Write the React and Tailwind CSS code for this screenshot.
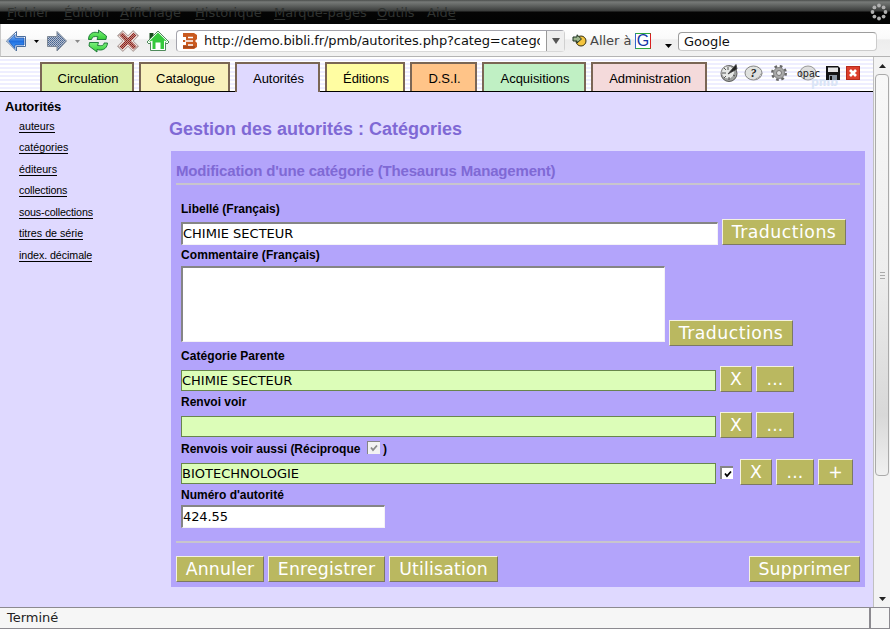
import React from 'react';

const UI = 'font-["DejaVu_Sans",sans-serif]';
const SANS = 'font-["Liberation_Sans",Arial,sans-serif]';

const menus = [
  ['', 'F', 'ichier', 'w-[57px]'],
  ['', 'É', 'dition', 'w-[56px]'],
  ['', 'A', 'ffichage', 'w-[75px]'],
  ['', 'H', 'istorique', 'w-[79px]'],
  ['', 'M', 'arque-pages', 'w-[103px]'],
  ['', 'O', 'utils', 'w-[50px]'],
  ['Aid', 'e', '', 'w-[40px]'],
];

const tabs = [
  ['Circulation', 'w-[94px] bg-[#dcf0a8]'],
  ['Catalogue', 'w-[91px] bg-[#f8f1bc]'],
  ['Autorités', 'w-[85px] bg-[#dfd9ff]'],
  ['Éditions', 'w-[80px] bg-[#fffda2]'],
  ['D.S.I.', 'w-[67px] bg-[#ffc488]'],
  ['Acquisitions', 'w-[104px] bg-[#c0f0c4]'],
  ['Administration', 'w-[116px] bg-[#f4dadb]'],
];

const links = [
  ['auteurs', ''],
  ['catégories', ''],
  ['éditeurs', ''],
  ['collections', 'tracking-[-0.15px]'],
  ['sous-collections', 'tracking-[-0.13px]'],
  ['titres de série', ''],
  ['index. décimale', 'tracking-[-0.07px]'],
];

function MenuBar() {
  return (
    <div className={`${UI} relative flex h-6 bg-[linear-gradient(#4a4d4b_0px,#777a78_2px,#636664_5px,#393b3a_11px,#050505_12px,#020303_24px)] pl-[7px] text-[13px] leading-[26px] text-[#303331]`}>
      {menus.map(([a, u, b, w]) => (
        <span key={u + b} className={`${w} shrink-0 whitespace-nowrap`}>
          {a}<span className="underline underline-offset-2">{u}</span>{b}
        </span>
      ))}
      <svg className="absolute left-[870px] top-[3px]" width="18" height="18" viewBox="0 0 18 18" fill="#b0b0b0">
        <circle cx="9" cy="2.5" r="1.9" /><circle cx="13.6" cy="4.4" r="1.9" /><circle cx="15.5" cy="9" r="1.9" /><circle cx="13.6" cy="13.6" r="1.9" />
        <circle cx="9" cy="15.5" r="1.9" /><circle cx="4.4" cy="13.6" r="1.9" /><circle cx="2.5" cy="9" r="1.9" /><circle cx="4.4" cy="4.4" r="1.9" />
      </svg>
    </div>
  );
}

function NavIcons() {
  return (
    <svg className="shrink-0" width="175" height="33" viewBox="0 24 175 33">
      <defs>
        <linearGradient id="blue" x1="0" y1="0" x2="0" y2="1"><stop offset="0" stopColor="#8ec2f8" /><stop offset=".5" stopColor="#1f6fe0" /><stop offset="1" stopColor="#4da3ff" /></linearGradient>
        <linearGradient id="green" x1="0" y1="0" x2="0" y2="1"><stop offset="0" stopColor="#7df07d" /><stop offset="1" stopColor="#35cf35" /></linearGradient>
        <pattern id="dots" width="2" height="2" patternUnits="userSpaceOnUse"><rect width="2" height="2" fill="#b4bed0" /><rect width="1" height="1" fill="#44628f" /><rect x="1" y="1" width="1" height="1" fill="#5d7499" /></pattern>
        <pattern id="reddots" width="2" height="2" patternUnits="userSpaceOnUse"><rect width="2" height="2" fill="#b98f88" /><rect width="1" height="1" fill="#8c1a18" /><rect x="1" y="1" width="1" height="1" fill="#a02a20" /></pattern>
      </defs>
      <path d="M6.500 41 16.500 31.500V36.500H25.500V46.500H16.500V51Z" fill="#fff" stroke="#4a6d9c" strokeWidth="1" />
      <path d="M8.500 41 15 34.500V38H24V45H15V48.500Z" fill="url(#blue)" stroke="#1551b0" strokeWidth=".8" />
      <path d="M34 40h5l-2.500 3z" fill="#000" />
      <path d="M66.500 41 57 31.500V36.500H47.500V46.500H57V51Z" fill="url(#dots)" stroke="#7c8795" strokeWidth="1" />
      <path d="M75 40h5l-2.500 3z" fill="#888" />
      <g stroke="#167232" strokeWidth=".9" fill="url(#green)" strokeLinejoin="round">
        <path d="M88.500 39.500C88.500 33 94 31 98.500 33L98.500 30 106.500 36 106 39.500 97 39.500 98 36.800C94 36 92 37 91.500 39.500Z" />
        <path d="M107.500 43C107 49.500 101.500 51 97 49.500L97 52 89 46 89.500 42.500 98.500 42.500 97.500 45.500C102 46 104 45.500 104 43Z" />
      </g>
      <g fill="none">
        <path d="M120 33 136 49M136 33 120 49" stroke="#8b7773" strokeWidth="8" />
        <path d="M120.500 33.500 135.500 48.500M135.500 33.500 120.500 48.500" stroke="#f1e4e0" strokeWidth="6.800" />
        <path d="M121 34 135 48M135 34 121 48" stroke="url(#reddots)" strokeWidth="4.400" />
      </g>
      <path d="M149.500 33h4v4l-4 3z" fill="#164d1c" />
      <path d="M147 42 158 31 169 42 167 44 165.500 42.500V50.500H150.500V42.500L149 44Z" fill="#fff" stroke="#4f8a5b" strokeWidth="1" />
      <path d="M148.500 42 158 32.500 167.500 42 164 40.500V49H160.500V42.500H155.500V49H152.500V40.500Z" fill="#35c93c" />
    </svg>
  );
}

function Toolbar() {
  return (
    <div className={`${UI} flex h-[33px] items-center border-b border-[#b4b4b4] border-l border-l-[#c8c8c8] bg-[linear-gradient(#ffffff,#fafafa_45%,#ededed_50%,#f2f2f2)] text-[13px]`}>
      <div className="-ml-px flex shrink-0"><NavIcons /></div>
      <div className="ml-px mt-px flex h-[22px] w-[389px] shrink-0 items-center rounded-sm border border-[#a4a4ac] border-r-[#d0d0d0] border-b-[#d8d8d8] bg-white">
        <svg className="ml-[6px] shrink-0" width="15" height="16" viewBox="0 0 15 16">
          <path d="M0 0H11L14 2V6L12 8 14 10V14L11 16H0V12H3V9H0V7H3V4H0Z" fill="#c95a20" />
          <path d="M5 4.500H10M2 8H10M5 12H10" stroke="#fff" strokeWidth="1.500" /><path d="M0 14h12" stroke="#85391a" />
        </svg>
        <span className="ml-[6px] mt-px w-[336px] shrink-0 overflow-hidden whitespace-nowrap text-[13px] leading-5 tracking-[-0.100px] text-[#111]">http://demo.bibli.fr/pmb/autorites.php?categ=categories</span>
        <span className="ml-[6px] flex h-5 flex-1 items-center justify-center border-l border-[#999] bg-[#efefef]">
          <svg width="8" height="6"><path d="M0 0H8L4 6Z" fill="#555" /></svg>
        </span>
      </div>
      <svg className="ml-[7px] shrink-0" width="15" height="13" viewBox="0 0 15 13">
        <circle cx="9" cy="7" r="5" fill="#f4c43e" stroke="#35300f" />
        <path d="M1 3H5V.8L9.500 5 5 9V7H1Z" fill="#9bb48b" stroke="#1c3020" />
      </svg>
      <span className="ml-[3px] mt-[2px] w-[45px] shrink-0 whitespace-nowrap text-[#444]">Aller à</span>
      <span className="mt-px flex h-4 w-4 shrink-0 items-center justify-center border border-t-[#2fa83c] border-r-[#d81f1f] border-b-[#2fa83c] border-l-[#3366cc] bg-white font-['Liberation_Sans',sans-serif] text-[16px] leading-none text-[#1437a5]">G</span>
      <svg className="ml-[14px] mt-[11px] shrink-0" width="7" height="4"><path d="M0 0H7L3.500 4Z" fill="#000" /></svg>
      <span className="ml-[6px] mt-[2px] h-[19px] w-[199px] rounded-sm border border-[#9d9d9d] border-r-[#ccc] border-b-[#ccc] bg-white pl-[5px] leading-[17px] text-[#111]">Google</span>
    </div>
  );
}

function PageIcons() {
  return (
    <svg className="ml-[7px] mt-[2px] shrink-0" width="154" height="28" viewBox="719 62 154 28">
      <g stroke="#444" strokeWidth=".9">
        <circle cx="729" cy="73.500" r="8" fill="#9fa2a0" stroke="#505050" />
        <circle cx="728" cy="72.500" r="6.500" fill="#e6e8e6" stroke="#999" />
        <path d="M728 67v3M722 73h4M724 68l2 2M724 78l2-2M729 80v-3M735 76l-2-1" />
        <path d="M728 74 736 64.500 737 69Z" fill="#222" />
      </g>
      <ellipse cx="753.500" cy="73" rx="8.500" ry="7" fill="#dfe1df" stroke="#858585" />
      <path d="M756 79q5-2 5.500-6" stroke="#999" strokeWidth="2" strokeDasharray="1 1" fill="none" />
      <text x="750.500" y="77" fontFamily="Liberation Serif" fontSize="12" fontStyle="italic" fontWeight="bold" fill="#222">?</text>
      <circle cx="779" cy="73" r="6.500" fill="none" stroke="#686868" strokeWidth="3" strokeDasharray="2.550 2.550" />
      <circle cx="779" cy="73" r="5.500" fill="#a9a9a9" stroke="#888" /><circle cx="779" cy="73" r="2.500" fill="#e2e2e2" stroke="#777" />
      <ellipse cx="808" cy="73" rx="8" ry="7" fill="#dedede" stroke="#999" />
      <text x="811" y="86" fontFamily="DejaVu Sans" fontSize="13" fontWeight="bold" fill="#d9e4f6" textLength="27" lengthAdjust="spacingAndGlyphs">pmb</text>
      <text x="797" y="76.500" fontFamily="DejaVu Sans" fontSize="10.500" fill="#222" textLength="23" lengthAdjust="spacingAndGlyphs">opac</text>
      <path d="M826 66H838L840 68V80H826Z" fill="#141414" /><path d="M828 67.500H838V72H828Z" fill="#e5e5e5" /><path d="M829 75H837V80H829Z" fill="#8994a0" /><path d="M830 76h2v4h-2z" fill="#111" />
      <rect x="846.500" y="66.500" width="13" height="13" fill="#dc3e2c" stroke="#b62a1b" />
      <path d="M850 70 856 76M856 70 850 76" stroke="#fff" strokeWidth="2.700" />
    </svg>
  );
}

function Tabs() {
  return (
    <div className={`${SANS} flex h-[35px] w-[873px] gap-[5px] border-b border-black bg-[repeating-linear-gradient(#ffffff_0px,#ffffff_2px,#eeeeff_2px,#eeeeff_4px)] pl-[40px] pt-[5px] text-[13px]`}>
      {tabs.map(([name, cls], i) => (
        <div key={name} className={`${cls} ${i === 2 ? 'h-[30px]' : 'h-[29px]'} shrink-0 border-2 border-b-0 border-[#7a6655] pl-[2px] pt-[5px] text-center leading-5 tracking-[-0.05px] whitespace-nowrap text-black`}>{name}</div>
      ))}
      <div className="-mt-[2px]"><PageIcons /></div>
    </div>
  );
}

function Btn({ w, children, className = '' }) {
  return (
    <button className={`${UI} ${w} ${className} h-[26px] shrink-0 border border-t-[#f4f2e0] border-r-[#7c7963] border-b-[#7c7963] border-l-[#f4f2e0] bg-[#bab860] text-center text-[17.3px] leading-[23px] tracking-[0.2px] whitespace-nowrap text-white`}>{children}</button>
  );
}

function Label({ children, className }) {
  return <div className={`${SANS} ${className} flex h-4 items-center pl-[5px] text-[12px] leading-4 font-bold whitespace-nowrap text-black`}>{children}</div>;
}

function GreenField({ children }) {
  return <div className={`${UI} mt-1 h-[21px] w-[535px] shrink-0 border border-[#68864c] bg-[#dcfdb8] text-[13px] leading-[19px] text-black`}>{children}</div>;
}

const inset = 'border-t-2 border-l-2 border-r border-b border-t-[#858585] border-l-[#858585] border-r-[#f4f2f6] border-b-[#f4f2f6] bg-white';

function Check({ muted }) {
  return (
    <span className={`flex h-[13px] w-[13px] shrink-0 items-center justify-center border-[#858585] ${muted ? '-mt-[3px] border-t border-l bg-[#f2f2f2]' : 'border-t-2 border-l-2 bg-white'}`}>
      <svg width="8" height="8" viewBox="0 0 8 8"><path d="M1 3.500 3 6 7 1.500" fill="none" stroke={muted ? '#8a8a8a' : '#000'} strokeWidth="1.800" /></svg>
    </span>
  );
}

function Sidebar() {
  return (
    <div className={`${SANS} w-[169px] shrink-0 pl-[5px] pt-[7px] text-black`}>
      <div className="h-[17px] text-[13px] leading-4 font-bold tracking-[-0.1px]">Autorités</div>
      <div className="flex flex-col items-start pl-[14px]">
        {links.map(([l, track]) => (
          <div key={l} className="h-[21.45px] pt-[4px]">
            <a className={`${track} block h-[13px] border-b border-black text-[10.7px] leading-[13px] whitespace-nowrap`}>{l}</a>
          </div>
        ))}
      </div>
    </div>
  );
}

function Form() {
  return (
    <div className="ml-[2px] mt-[11px] h-[436px] w-[694px] bg-[#b3a4fb] px-[5px] pt-[11px]">
      <h3 className={`${SANS} h-[21px] text-[15px] leading-[18px] font-bold tracking-[-0.18px] whitespace-nowrap text-[#7f69d5]`}>Modification d'une catégorie (Thesaurus Management)</h3>
      <div className="h-[2px] bg-[#c8c5cd]" />
      <Label className="mt-[16px]">Libellé (Français)</Label>
      <div className="mt-[2px] flex gap-1 pl-[5px]">
        <div className={`${UI} ${inset} mt-[3px] h-[23px] w-[537px] text-[13px] leading-5`}>CHIMIE SECTEUR</div>
        <Btn w="w-[124px]"><span className="tracking-[0.5px]">Traductions</span></Btn>
      </div>
      <Label className="mt-[2px]"><span className="tracking-[0.07px]">Commentaire (Français)</span></Label>
      <div className="mt-[3px] flex h-[80px] items-end gap-1 pl-[5px]">
        <div className={`${inset} mb-1 h-[76px] w-[484px]`} />
        <Btn w="w-[124px]"><span className="tracking-[0.5px]">Traductions</span></Btn>
      </div>
      <Label className="mt-[2px]"><span className="tracking-[0.06px]">Catégorie Parente</span></Label>
      <div className="mt-[2px] flex gap-1 pl-[5px]">
        <GreenField>CHIMIE SECTEUR</GreenField><Btn w="w-[32px]">X</Btn><Btn w="w-[38px]">...</Btn>
      </div>
      <Label className="mt-[2px]">Renvoi voir</Label>
      <div className="mt-[2px] flex gap-1 pl-[5px]">
        <GreenField /><Btn w="w-[32px]">X</Btn><Btn w="w-[38px]">...</Btn>
      </div>
      <Label className="mt-[3px]">
        <span className="w-[186px]">Renvois voir aussi (Réciproque</span><Check muted /><span className="ml-[3px]">)</span>
      </Label>
      <div className="mt-[2px] flex gap-1 pl-[5px]">
        <GreenField>BIOTECHNOLOGIE</GreenField>
        <span className="mr-[3px] mt-[7px]"><Check /></span>
        <Btn w="w-[32px]">X</Btn><Btn w="w-[38px]">...</Btn><Btn w="w-[35px]">+</Btn>
      </div>
      <Label className="mt-[2px]">Numéro d'autorité</Label>
      <div className={`${UI} ${inset} ml-[5px] mt-[2px] h-[23px] w-[204px] text-[13px] leading-5 tracking-[-0.1px]`}>424.55</div>
      <div className="mt-[13px] h-[2px] bg-[#c8c5cd]" />
      <div className="mt-[13px] flex gap-1">
        <Btn w="w-[88px]">Annuler</Btn><Btn w="w-[117px]">Enregistrer</Btn><Btn w="w-[109px]">Utilisation</Btn>
        <Btn w="w-[111px]" className="ml-auto">Supprimer</Btn>
      </div>
    </div>
  );
}

function Scrollbar() {
  return (
    <div className="flex w-[17px] shrink-0 flex-col items-center border-l border-[#c0c0c0] bg-[#f3f3f3]">
      <div className="flex h-[17px] w-full items-center justify-center"><svg width="7" height="4"><path d="M0 4 3.500 0 7 4Z" fill="#222" /></svg></div>
      <div className="flex h-[402px] w-[14px] flex-col items-center justify-center gap-[2px] rounded-sm border border-[#aaa] bg-[linear-gradient(#f8f8f8,#ededed_50%,#d8d8d8_85%,#f0f0f0)]">
        <div className="h-px w-[5px] bg-[#aaa]" /><div className="h-px w-[5px] bg-[#aaa]" /><div className="h-px w-[5px] bg-[#aaa]" />
      </div>
      <div className="mt-auto flex h-[16px] items-center"><svg width="7" height="4"><path d="M0 0H7L3.500 4Z" fill="#222" /></svg></div>
    </div>
  );
}

export default function App() {
  return (
    <div className="flex h-[629px] w-[890px] flex-col overflow-hidden bg-white">
      <MenuBar />
      <Toolbar />
      <div className="flex h-[550px] bg-[#dfd9ff]">
        <div className="w-[873px] shrink-0">
          <Tabs />
          <div className="flex">
            <Sidebar />
            <main>
              <h1 className={`${SANS} mt-[26px] h-[22px] text-[18px] leading-[22px] font-bold whitespace-nowrap text-[#7f69d5]`}>Gestion des autorités : Catégories</h1>
              <Form />
            </main>
          </div>
        </div>
        <Scrollbar />
      </div>
      <div className={`${UI} flex h-[22px] border-y border-[#8c8a90] bg-[#f6f6f6] text-[13px] leading-[19px] text-[#222]`}>
        <div className="w-[869px] pl-[7px]">Terminé</div>
        <div className="flex-1 border-r border-l-2 border-[#8c8a90]" />
      </div>
    </div>
  );
}
